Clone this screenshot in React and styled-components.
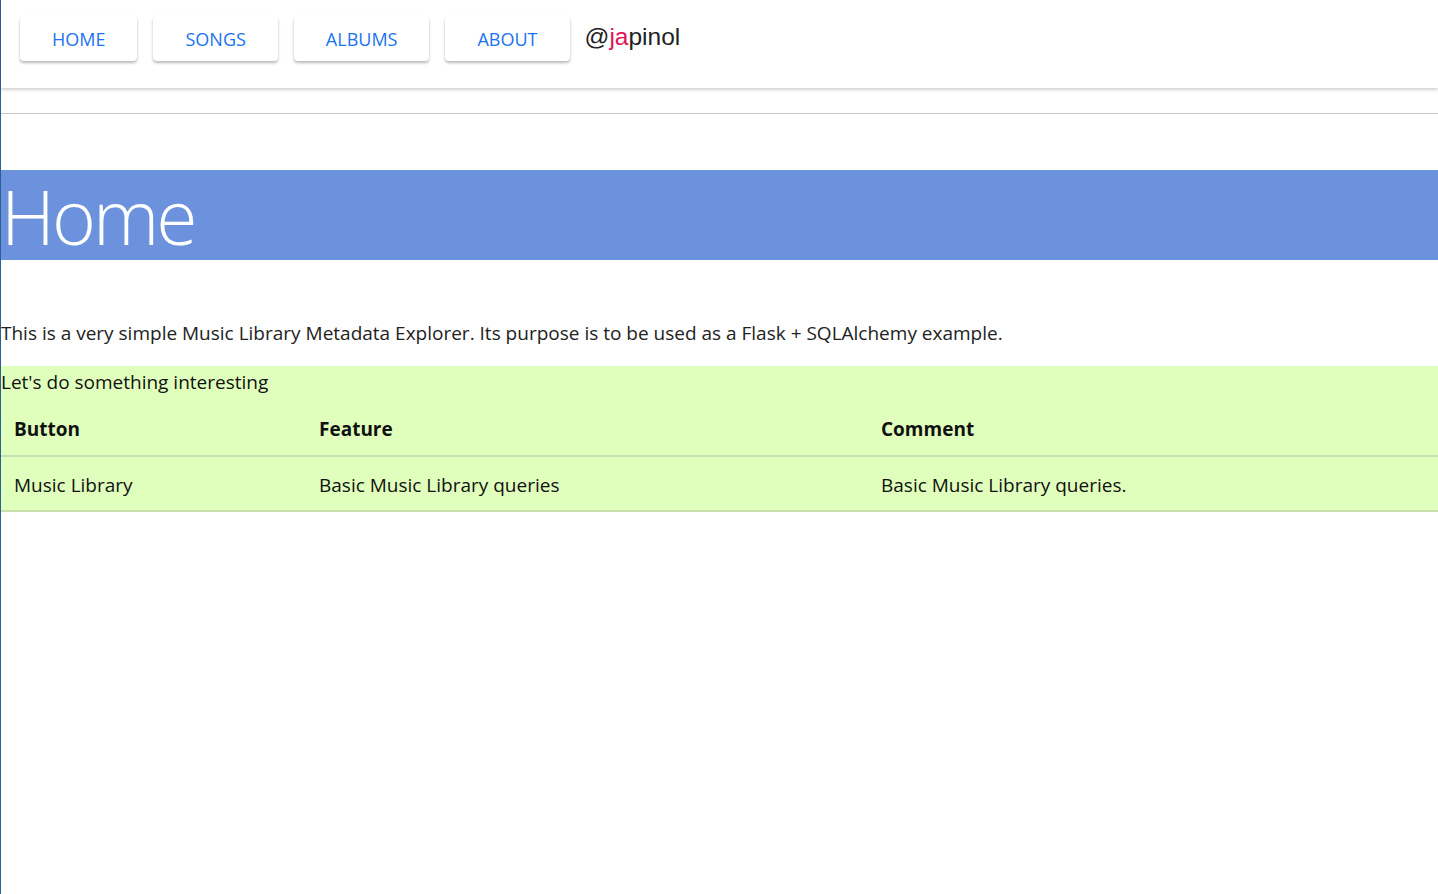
import React from 'react';
import styled, { createGlobalStyle } from 'styled-components';

const Global = createGlobalStyle`
body {
    margin: 0;
    font-family: "Open Sans", "Noto Sans", sans-serif;
    background: white;
}
`

const Page = styled.div`
min-height: 100vh;
border-left: 1px solid #2a6099;
box-sizing: border-box;
`

const Nav = styled.nav`
height: 88px;
display: flex;
align-items: flex-start;
gap: 16px;
padding: 16px 0 0 19px;
box-sizing: border-box;
box-shadow: 0 2px 3px rgba(0,0,0,0.18);
`

const NavButton = styled.button`
height: 45px;
padding: 0 32px;
background: white;
border: none;
border-radius: 4px;
box-shadow: 0 2px 3px rgba(0,0,0,0.28);
color: #1a73f0;
font-family: "Open Sans", sans-serif;
font-size: 18px;
font-weight: 400;
text-transform: uppercase;
cursor: pointer;
`

const Handle = styled.div`
font-family: "Liberation Sans", Arial, sans-serif;
font-size: 24.5px;
color: #222;
margin-top: 7px;
margin-left: -1px;

span { color: #e0165a; }
`

const Rule = styled.hr`
margin: 25px 0 0 0;
border: none;
border-top: 1px solid #c8c8c8;
`

const Banner = styled.h1`
margin: 56px 0 0 0;
height: 90px;
padding-top: 2px;
box-sizing: border-box;
background: #6c91dd;
color: white;
font-family: "Open Sans", sans-serif;
font-weight: 300;
font-size: 75px;
line-height: 88px;
letter-spacing: -3px;
`

const Intro = styled.p`
margin: 60px 0 0 0;
font-size: 19px;
line-height: 26px;
color: #222;
`

const Section = styled.section`
margin-top: 20px;
background: #e0ffbc;
`

const Lead = styled.div`
font-size: 19px;
line-height: 33px;
color: #111;
`

const Table = styled.table`
width: 100%;
border-collapse: collapse;
font-size: 19px;
color: #111;
`

const Cell = styled.td`
padding: 0 13px;
height: ${p => p.head ? 57 : 55}px;
padding-top: ${p => p.head ? 4 : 3}px;
font-weight: ${p => p.head ? 700 : 400};
border-bottom: 2px solid #c9dfae;
text-align: left;
width: ${p => p.w || 'auto'};
box-sizing: border-box;
`

const rows = [
    ['Music Library', 'Basic Music Library queries', 'Basic Music Library queries.'],
];

function App(){
return (
    <Page>
        <Global />
        <Nav>
            <NavButton>Home</NavButton>
            <NavButton>Songs</NavButton>
            <NavButton>Albums</NavButton>
            <NavButton>About</NavButton>
            <Handle>@<span>ja</span>pinol</Handle>
        </Nav>
        <Rule />
        <Banner>Home</Banner>
        <Intro>This is a very simple Music Library Metadata Explorer. Its purpose is to be used as a Flask + SQLAlchemy example.</Intro>
        <Section>
            <Lead>Let's do something interesting</Lead>
            <Table>
                <thead>
                    <tr>
                        <Cell as="th" head w="305px">Button</Cell>
                        <Cell as="th" head w="562px">Feature</Cell>
                        <Cell as="th" head>Comment</Cell>
                    </tr>
                </thead>
                <tbody>
                    {rows.map(r => (
                        <tr key={r[0]}>
                            {r.map(c => <Cell key={c}>{c}</Cell>)}
                        </tr>
                    ))}
                </tbody>
            </Table>
        </Section>
    </Page>
)
}

export default App
